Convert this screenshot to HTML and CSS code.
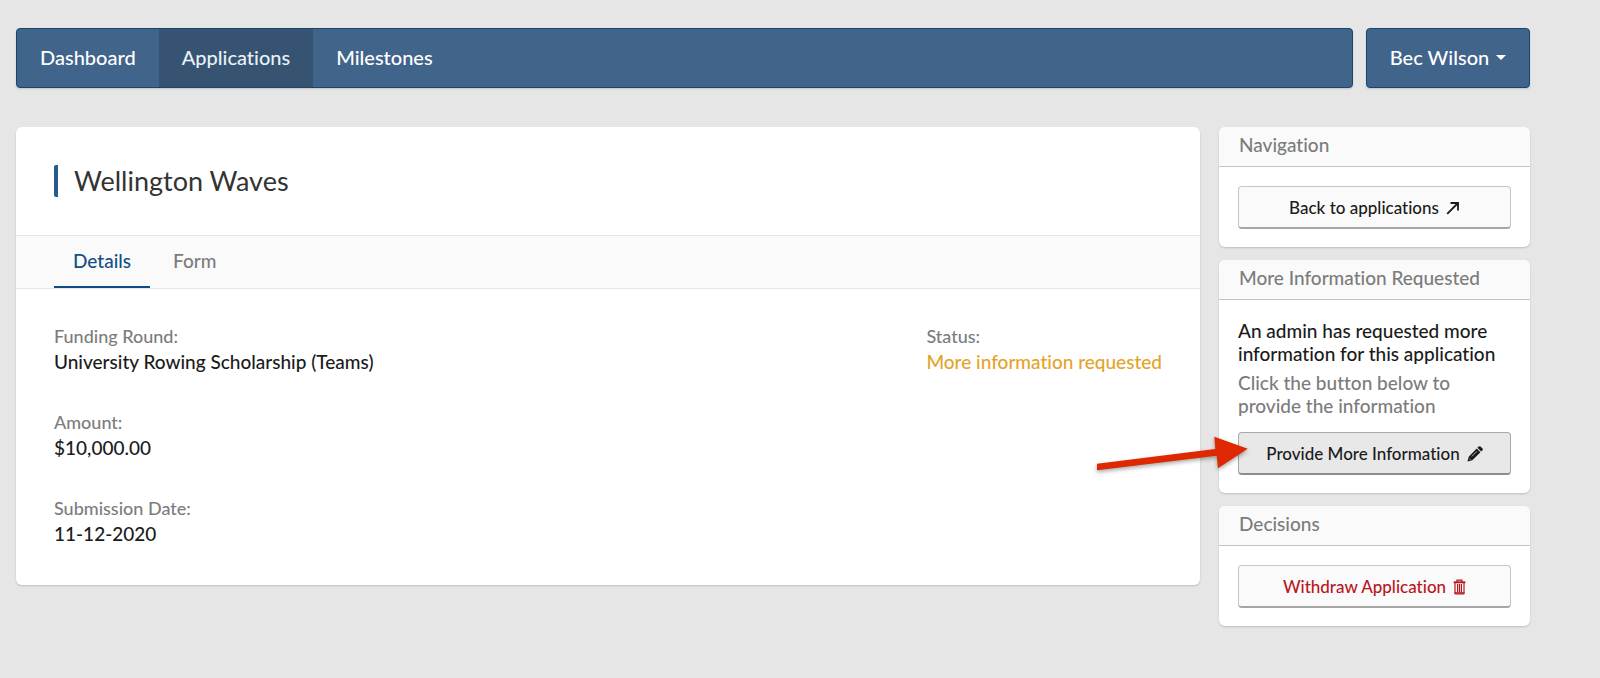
FILE: index.html
```html
<!DOCTYPE html>
<html lang="en">
<head>
<meta charset="utf-8">
<title>Wellington Waves</title>
<link rel="stylesheet" href="styles.css">
</head>
<body>
<div class="page">
  <header class="topbar">
    <nav class="nav">
      <a class="nav-link" href="#">Dashboard</a>
      <a class="nav-link active" href="#">Applications</a>
      <a class="nav-link" href="#">Milestones</a>
    </nav>
    <button class="user" type="button">Bec Wilson <span class="caret"></span></button>
  </header>
  <div class="columns">
    <main class="card main">
      <div class="title-row"><h1 class="title">Wellington Waves</h1></div>
      <div class="tabs">
        <a class="tab current" href="#">Details</a>
        <a class="tab" href="#">Form</a>
      </div>
      <div class="details">
        <dl class="fields">
          <div><dt>Funding Round:</dt><dd>University Rowing Scholarship (Teams)</dd></div>
          <div><dt>Amount:</dt><dd>$10,000.00</dd></div>
          <div><dt>Submission Date:</dt><dd>11-12-2020</dd></div>
        </dl>
        <dl class="fields">
          <div><dt>Status:</dt><dd class="pending">More information requested</dd></div>
        </dl>
      </div>
    </main>
    <aside class="sidebar">
      <section class="card">
        <h2 class="card-head">Navigation</h2>
        <div class="card-body">
          <button class="btn" type="button">Back to applications
            <svg class="icon" width="14" height="14" viewBox="0 0 14 14"><path d="M1.2 12.8 11 3M4.5 2H12v7.5" fill="none" stroke="currentColor" stroke-width="1.8"/><path d="M9 1.2h3.8V5z" fill="currentColor"/></svg>
          </button>
        </div>
      </section>
      <section class="card">
        <h2 class="card-head">More Information Requested</h2>
        <div class="card-body">
          <p class="note">An admin has requested more information for this application</p>
          <p class="note hint">Click the button below to provide the information</p>
          <div class="callout">
            <button class="btn pressed" type="button">Provide More Information
              <svg class="icon" width="16" height="16" viewBox="0 0 16 16"><path d="M10.4 1.8 11.7.6q.9-.8 1.8 0l2 2q.7.8 0 1.7L14.2 5.6zM9.7 2.5l3.8 3.8-8.2 8L.5 15.5 1.7 10.7z" fill="currentColor"/><path d="m4.8 10.4 5-5M2.4 12.6l1.2 1.2" stroke="#e8e8e8" stroke-width=".7"/></svg>
            </button>
            <svg class="arrow" width="164" height="46" viewBox="0 0 164 46"><path d="M8 33.7 126.3 19l-1-12.3 33.4 12L129 38.3l-1.3-12.6L8 40.3z" fill="#dd2802"/></svg>
          </div>
        </div>
      </section>
      <section class="card">
        <h2 class="card-head">Decisions</h2>
        <div class="card-body">
          <button class="btn danger" type="button">Withdraw Application
            <svg class="icon" width="13" height="16" viewBox="0 0 13 16"><path d="M.5 3.3h12M4 3V1.2h5V3M2 3.5v10.7q0 .8.8.8h7.4q.8 0 .8-.8V3.5M4.6 5v8.5M6.5 5v8.5M8.4 5v8.5" fill="none" stroke="currentColor" stroke-width="1.2"/><path d="M1.5 14h10M1 3.4h11" stroke="currentColor" stroke-width="1.6"/></svg>
          </button>
        </div>
      </section>
    </aside>
  </div>
</div>
</body>
</html>
```
FILE: styles.css
```css
* { box-sizing: border-box; }
body {
  margin: 0;
  background: #e6e6e6;
  color: #1b1b1b;
  font: 500 19px/24px Lato, "Open Sans", sans-serif;
  font-variant-ligatures: none;
}
h1, h2, p, dl, dd { margin: 0; font-weight: 500; }
a { text-decoration: none; }
button { font: inherit; font-variant-ligatures: none; color: inherit; cursor: pointer; }

.page { padding: 28px 70px 28px 16px; }
.topbar { display: flex; gap: 13px; margin-bottom: 39px; }
.nav, .user {
  background: #41648b;
  border: 1px solid #164770;
  border-radius: 4px;
  box-shadow: 0 1px 2px rgba(0, 0, 0, .15);
  color: #fff;
  font-size: 20px;
}
.nav { display: flex; flex: 1; overflow: hidden; }
.nav-link { padding: 16px 23px 18px; color: #fff; }
.nav-link.active { background: #365472; color: #e8f0f8; }
.user { display: flex; align-items: center; justify-content: center; gap: 7px; width: 164px; height: 60px; padding-bottom: 3px; }
.caret { border: 5px solid transparent; border-top-color: #fff; border-bottom: 0; }

.columns { display: flex; align-items: flex-start; gap: 19px; }
.card { background: #fff; border-radius: 6px; box-shadow: 0 1px 2px rgba(0, 0, 0, .18); }
.main { flex: 1; }
.title-row { padding: 38px; }
.title { border-left: 4px solid #275b8c; border-radius: 2px; padding-left: 16px; font-size: 27px; line-height: 32px; font-weight: 400; color: #333; }
.tabs {
  display: flex;
  gap: 4px;
  padding: 0 38px;
  background: #fafafa;
  border-top: 1px solid #e6e6e6;
  border-bottom: 1px solid #e6e6e6;
}
.tab { padding: 13px 19px 13px; border-bottom: 2px solid transparent; color: #7c7c7c; }
.tab.current { color: #164f86; border-bottom-color: #0f4c85; }

.details { display: flex; justify-content: space-between; padding: 34px 38px 39px; }
.fields { display: flex; flex-direction: column; gap: 35px; }
dt { font-size: 18px; line-height: 26px; color: #7c7c7c; }
dd { line-height: 25px; }
.pending { color: #e4a32b; }

.sidebar { display: flex; flex-direction: column; gap: 13px; width: 311px; }
.card-head {
  padding: 6px 20px 9px;
  background: #fafafa;
  border-bottom: 1px solid #c4c4c4;
  border-radius: 6px 6px 0 0;
  font-size: 19px;
  color: #7c7c7c;
}
.card-body { padding: 19px 19px 18px; }
.note { margin-bottom: 6px; line-height: 23px; }
.hint { margin-bottom: 15px; color: #7c7c7c; }
.btn {
  display: flex;
  align-items: center;
  justify-content: center;
  gap: 7px;
  width: 100%;
  height: 43px;
  padding: 2px 6px 0;
  background: #fafafa;
  border: 1px solid #c6c6c6;
  border-bottom: 2px solid #a6a6a6;
  border-radius: 4px;
  font-size: 17px;
}
.pressed { background: #e8e8e8; border-color: #a8a8a8 #a8a8a8 #8c8c8c; }
.danger { color: #b9161d; }
.callout { position: relative; }
.arrow { position: absolute; left: -149px; top: -2px; pointer-events: none; filter: drop-shadow(0 2px 2px rgba(0, 0, 0, .35)); }
```
